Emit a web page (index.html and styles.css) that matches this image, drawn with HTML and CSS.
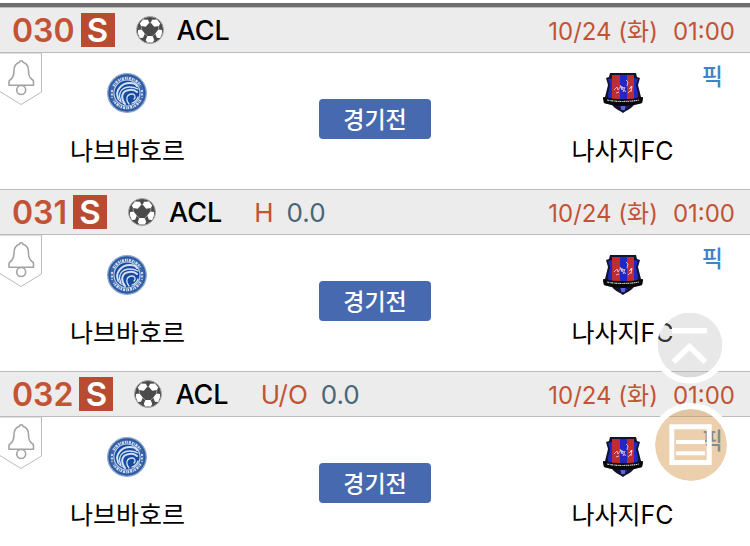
FILE: index.html
```html
<!DOCTYPE html>
<html lang="ko">
<head>
<meta charset="utf-8">
<meta name="viewport" content="width=device-width, initial-scale=1">
<title>경기 일정</title>
<link rel="stylesheet" href="styles.css">
</head>
<body>
<svg class="defs" aria-hidden="true">
  <symbol id="ball" viewBox="0 0 28 28">
    <circle cx="14" cy="14" r="13.5" fill="#4b4b4b" stroke="#a8a8a8"/>
    <path fill="#fff" d="M7 3.5l5 .2 1.2 3-3.400 4-4.700-.6-1.300-2.600zM21 3.500l-5 .2-1.200 3 3.400 4 4.700-.6 1.300-2.600zM2 14l3.600-.6 3.200 4-1.700 4.300-3.200.3-1.800-4zM26 14l-3.600-.6-3.200 4 1.700 4.300 3.200.3 1.800-4zM11.300 20h5.400l1.600 4.300-1.800 2.200h-5l-1.800-2.200z"/>
    <path fill="none" stroke="#a8a8a8" stroke-width=".8" d="M12.800 6.700h2.400M9 18l2.400 2.200M19 18l-2.400 2.200M5 10l.6 3.400M23 10l-.6 3.400"/>
  </symbol>
  <symbol id="bell" viewBox="0 0 42 52">
    <path d="M-1 0H41.500V39L21 51.500-1 38" fill="#fff" stroke="#bababa"/>
    <g fill="none" stroke="#a3a3a3" stroke-width="1.600" stroke-linejoin="round">
      <path d="M19.500 9.300c0-2 3.500-2 3.500 0 3.700 1.200 5.500 4.200 5.500 8.200 0 5.500 1 7.500 4.200 9.500.7.500.8 1 .8 2v3.200H9V29c0-1 .2-1.500 1-2 3-2 4-4 4-9.500 0-4 1.800-7 5.500-8.200z"/>
      <circle cx="21.200" cy="37" r="4.500"/>
    </g>
  </symbol>
  <symbol id="crest-home" viewBox="0 0 40 40">
    <circle cx="20" cy="20" r="19.300" fill="#3c67ab" stroke="#8ea6cb" stroke-width="1.300"/>
    <circle cx="20" cy="20" r="17.800" fill="none" stroke="#1f509f" stroke-width=".8"/>
    <path fill="none" stroke="#d3deee" stroke-width="2.600" stroke-dasharray="1.500 .8 .8 .9 2 1.100" d="M6.500 13a15.500 15.500 0 0 1 27 0M33.500 27a15.500 15.500 0 0 1-27 0"/>
    <path fill="none" stroke="#c4d3e9" stroke-width="2" stroke-dasharray="2 1.600" d="M5 17v8M35 17v8"/>
    <circle cx="20" cy="20" r="13" fill="#164a9e" stroke="#bfd0e8" stroke-width="1.100"/>
    <g fill="none" stroke="#d5e1f2" stroke-linecap="round">
      <path stroke-width="2" d="M11 25C8 18 14 10 23 10c4 0 6 1 7 3M18 31c-5-7-3-13 4-14 3-.6 6 0 8 2"/>
      <path stroke-width="1.300" d="M14 28c-4-8 1-14 9-14 3 0 6 1 8 2M22 31c-4-5-2-10 3-10 3 0 4 3 2 5M11 26c2 3 4 4 7 5M25 30c3-1 5-3 6-6"/>
    </g>
  </symbol>
  <symbol id="crest-away" viewBox="0 0 40 40">
    <path fill="#10142c" d="M7 0h26l1 4 3 1-2 7 3 12 2 1-1 5-8 2c-3 4-7 5-11 8-4-3-8-4-11-8l-8-2-1-5 2-1 3-12-2-7 3-1z"/>
    <path fill="#2226c4" d="M5 6l4-1v26c-3-3-4-6-4-10l2-9zM35 6l-4-1v26c3-3 4-6 4-10l-2-9zM17 2h7v32l-4 4-3-4z"/>
    <path fill="#c12c32" d="M9 2h8v31c-4-1-7-3-8-6zM24 2h7v25c-1 3-3 5-7 6z"/>
    <path fill="none" stroke="#e0b5c6" stroke-width="1" d="M11 17l3-3 1 3 3-4M13 20l3-1M17 12l2 5 2-3M20 19l2-5M23 7l2 2-1 4M26 16l3-3-1 6M25 20l4-4"/>
    <path fill="#fff" d="M18 13l2 1-1 2zM22 17l1 2-2-1zM27 14l2-1-1 3z"/>
    <path fill="#080808" d="M0 24c13 3 27 3 40 0l-1 6c-13 4-25 4-38 0z"/>
    <path fill="none" stroke="#c9c9c9" stroke-width="1.200" stroke-dasharray="2 .6 1 .5" d="M4 27c11 2 21 2 32 0"/>
    <path fill="none" stroke="#9da3e5" d="M18 34h4M18 36h4"/>
  </symbol>
</svg>

<main class="matches">
  <article class="match">
    <header class="match-head">
      <span class="number">030</span><span class="badge">S</span>
      <svg class="ball" aria-hidden="true"><use href="#ball"/></svg>
      <span class="league">ACL</span>
      <time class="when"><span>10/24 (화)</span><span>01:00</span></time>
    </header>
    <div class="match-body">
      <button class="alarm" type="button" aria-label="알림"><svg class="bell"><use href="#bell"/></svg></button>
      <div class="team"><svg class="crest" aria-hidden="true"><use href="#crest-home"/></svg><span>나브바호르</span></div>
      <button class="status" type="button">경기전</button>
      <div class="team"><svg class="crest" aria-hidden="true"><use href="#crest-away"/></svg><span>나사지FC</span></div>
      <a class="pick" href="#">픽</a>
    </div>
  </article>

  <article class="match">
    <header class="match-head">
      <span class="number">031</span><span class="badge">S</span>
      <svg class="ball" aria-hidden="true"><use href="#ball"/></svg>
      <span class="league">ACL</span>
      <span class="line"><span class="kind">H</span><span>0.0</span></span>
      <time class="when"><span>10/24 (화)</span><span>01:00</span></time>
    </header>
    <div class="match-body">
      <button class="alarm" type="button" aria-label="알림"><svg class="bell"><use href="#bell"/></svg></button>
      <div class="team"><svg class="crest" aria-hidden="true"><use href="#crest-home"/></svg><span>나브바호르</span></div>
      <button class="status" type="button">경기전</button>
      <div class="team"><svg class="crest" aria-hidden="true"><use href="#crest-away"/></svg><span>나사지FC</span></div>
      <a class="pick" href="#">픽</a>
    </div>
  </article>

  <article class="match">
    <header class="match-head">
      <span class="number">032</span><span class="badge">S</span>
      <svg class="ball" aria-hidden="true"><use href="#ball"/></svg>
      <span class="league">ACL</span>
      <span class="line"><span class="kind">U/O</span><span>0.0</span></span>
      <time class="when"><span>10/24 (화)</span><span>01:00</span></time>
    </header>
    <div class="match-body">
      <button class="alarm" type="button" aria-label="알림"><svg class="bell"><use href="#bell"/></svg></button>
      <div class="team"><svg class="crest" aria-hidden="true"><use href="#crest-home"/></svg><span>나브바호르</span></div>
      <button class="status" type="button">경기전</button>
      <div class="team"><svg class="crest" aria-hidden="true"><use href="#crest-away"/></svg><span>나사지FC</span></div>
      <a class="pick" href="#">픽</a>
    </div>
  </article>
</main>

<nav class="floating">
  <button class="round to-top" type="button" aria-label="맨 위로">
    <svg viewBox="0 0 78 78"><circle cx="39" cy="39" r="32.500" fill="#b0b0b0" fill-opacity=".29"/><circle cx="39" cy="39" r="35.500" fill="none" stroke="#fff" stroke-width="6"/><path d="M21 24.800H56M22.500 56L38.500 40.500 54.500 56" fill="none" stroke="#fff" stroke-width="5.500"/></svg>
  </button>
  <button class="round memo" type="button" aria-label="목록">
    <svg viewBox="0 0 84 84"><circle cx="42" cy="42" r="36" fill="#d59449" fill-opacity=".45"/><circle cx="42" cy="42" r="39" fill="none" stroke="#fff" stroke-width="6"/><path d="M22.800 23.800H60.200V59.500H22.800z" fill="none" stroke="#fff" stroke-width="5"/><path d="M27 39H56M27 50.300H56" stroke="#fff" stroke-width="4"/></svg>
  </button>
</nav>
</body>
</html>
```

FILE: styles.css
```css
* { box-sizing: border-box; }

body {
  margin: 0;
  background: #fff;
  color: #000;
  font-family: Inter, "Noto Sans CJK KR", sans-serif;
  font-size: 25px;
}

button {
  padding: 0;
  border: 0;
  background: none;
  font: inherit;
  cursor: pointer;
}

svg { display: block; }

.defs {
  position: absolute;
  width: 0;
  height: 0;
}

.matches { padding-top: 3px; }

.matches::before {
  content: "";
  display: block;
  height: 4px;
  background: #6e6e6e;
}

.match-head {
  display: flex;
  align-items: center;
  height: 46px;
  padding: 0 15px 0 12px;
  border-top: 1px solid #bcbcbc;
  border-bottom: 1px solid #bcbcbc;
  background: #ececec;
  white-space: nowrap;
}

.number {
  color: #c35335;
  font-size: 32px;
  font-weight: 600;
}

.badge {
  width: 34px;
  height: 34px;
  margin-left: 6px;
  background: #b74c30;
  color: #fff;
  font-size: 33px;
  font-weight: 600;
  line-height: 35px;
  text-align: center;
}

.ball {
  width: 28px;
  height: 28px;
  margin-left: 21px;
}

.league {
  margin-left: 13px;
  font-size: 27px;
  font-weight: 500;
}

.line {
  display: flex;
  gap: 13px;
  margin-left: 32px;
  color: #466779;
  font-size: 26px;
}

.kind { color: #c35335; }

.when {
  display: flex;
  align-items: baseline;
  gap: 15px;
  margin-left: auto;
  padding-top: 3px;
  color: #c35335;
  font-size: 24px;
  line-height: 32px;
}

.match-body {
  position: relative;
  display: grid;
  grid-template-columns: 17fr 16fr 17fr;
  justify-items: center;
  align-items: start;
  padding: 20px 0 19px;
}

.match:last-child .match-body { padding-bottom: 0; }

.team {
  display: flex;
  flex-direction: column;
  align-items: center;
  gap: 19px;
  line-height: 38px;
}

.crest {
  width: 40px;
  height: 40px;
}

.status {
  width: 112px;
  height: 40px;
  margin-top: 26px;
  padding-bottom: 2px;
  border-radius: 4px;
  background: #4769b0;
  color: #fff;
  font-size: 23px;
  font-weight: 500;
}

.alarm {
  position: absolute;
  top: 0;
  left: 0;
}

.bell {
  width: 42px;
  height: 52px;
}

.pick {
  position: absolute;
  top: 8px;
  right: 27px;
  color: #3c85c6;
  font-size: 23px;
  font-weight: 500;
  line-height: 32px;
  text-decoration: none;
}

.floating {
  position: fixed;
  right: 17px;
  bottom: 59px;
  display: flex;
  flex-direction: column;
  align-items: flex-start;
}

.to-top { margin-left: 2px; }

.to-top svg {
  width: 78px;
  height: 78px;
}

.memo { margin-top: 19px; }

.memo svg {
  width: 84px;
  height: 84px;
}
```
